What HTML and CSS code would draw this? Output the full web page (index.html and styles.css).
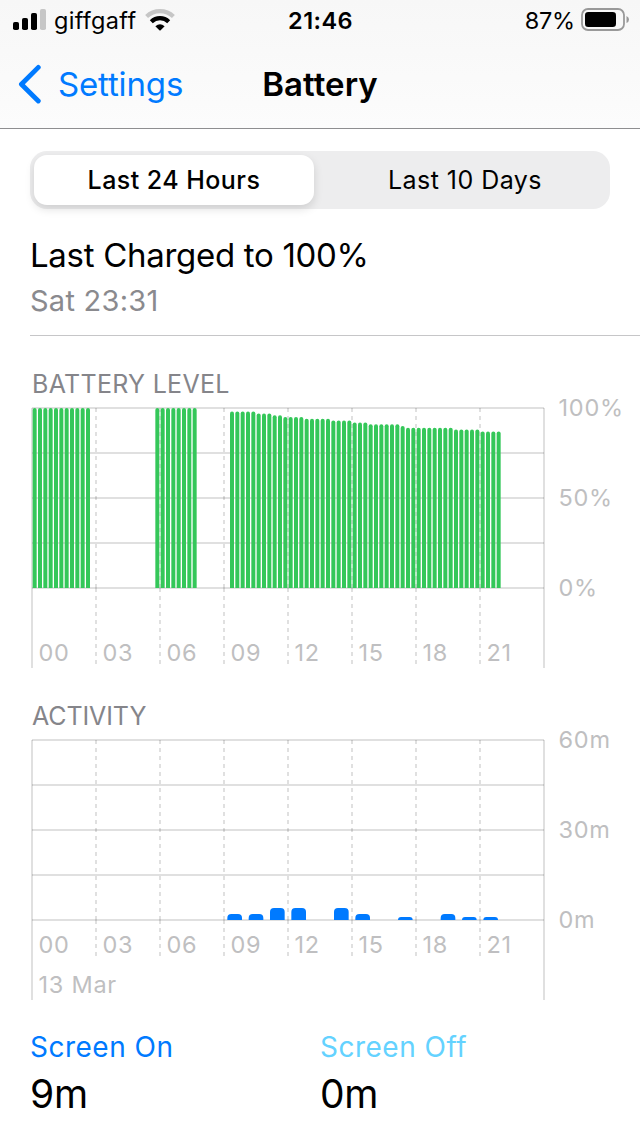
FILE: index.html
```html
<!DOCTYPE html>
<html lang="en">
<head>
<meta charset="utf-8">
<title>Battery</title>
<link rel="stylesheet" href="styles.css">
</head>
<body>
<header class="header">
  <div class="status">
    <div class="status-left">
      <svg class="signal" width="34" height="22" viewBox="0 0 34 22">
        <rect x="0" y="13" width="6" height="8" rx="1.8"/>
        <rect x="9" y="9" width="6" height="12" rx="1.8"/>
        <rect x="18" y="4" width="6" height="17" rx="1.8"/>
        <rect x="27" y="0" width="6" height="21" rx="1.8" fill="#c6c6c6"/>
      </svg>
      <span class="carrier">giffgaff</span>
      <svg class="wifi" width="30" height="22" viewBox="0 0 30 22" fill="none">
        <path d="M1.6 7.6 A19.3 19.3 0 0 1 28.4 7.6" stroke="#c6c6c6" stroke-width="4.2"/>
        <path d="M6.3 12.7 A12.4 12.4 0 0 1 23.7 12.7" stroke="#000" stroke-width="4.2"/>
        <path d="M10.4 17.2 Q15 13.4 19.6 17.2 L15.6 21.2 Q15 21.8 14.4 21.2 Z" fill="#000"/>
      </svg>
    </div>
    <div class="clock">21:46</div>
    <div class="status-right">
      <span class="percent">87%</span>
      <svg width="48" height="24" viewBox="0 0 48 24">
        <rect x="1" y="1" width="42" height="21" rx="6" fill="none" stroke="#999" stroke-width="1.8"/>
        <rect x="4" y="4" width="31" height="15" rx="3.3"/>
        <path d="M45.5 8 Q48 9 48 11.5 Q48 14 45.5 15 Z" fill="#999"/>
      </svg>
    </div>
  </div>
  <nav class="nav">
    <a class="back">
      <svg width="24" height="40" viewBox="0 0 24 40" fill="none" stroke="#007aff" stroke-width="4.8" stroke-linecap="round" stroke-linejoin="round"><path d="M20.3 3.4 L3.4 20.2 L20.3 37"/></svg>
      <span>Settings</span>
    </a>
    <h1 class="title">Battery</h1>
  </nav>
</header>
<main>
  <div class="segments">
    <div class="segment selected"><span>Last 24 Hours</span></div>
    <div class="segment days"><span>Last 10 Days</span></div>
  </div>
  <section class="charged">
    <div class="charged-title"><span>Last Charged to 100%</span></div>
    <div class="charged-time"><span>Sat 23:31</span></div>
  </section>
  <section class="panel">
    <h2 class="heading level">BATTERY LEVEL</h2>
    <svg id="level" class="chart" width="640" height="308" viewBox="0 392 640 308"></svg>
  </section>
  <section class="panel">
    <h2 class="heading activity">ACTIVITY</h2>
    <svg id="activity" class="chart" width="640" height="284" viewBox="0 724 640 284"></svg>
  </section>
  <section class="totals">
    <div class="total"><div class="label on"><span>Screen On</span></div><div class="value"><span>9m</span></div></div>
    <div class="total"><div class="label off"><span>Screen Off</span></div><div class="value"><span>0m</span></div></div>
  </section>
</main>
<script src="script.js"></script>
</body>
</html>
```
FILE: styles.css
```css
* { box-sizing: border-box; }
body {
  margin: 0;
  width: 640px;
  height: 1136px;
  overflow: hidden;
  background: #fff;
  color: #000;
  font-family: Inter, "Liberation Sans", sans-serif;
}
.header {
  height: 129px;
  background: linear-gradient(#f7f7f7, #fcfcfc);
  border-bottom: 1px solid #8e8e90;
}
.status {
  height: 40px;
  display: grid;
  grid-template-columns: 1fr auto 1fr;
  align-items: center;
  padding: 0 11px 0 13px;
  font-size: 23.5px;
}
.status-left, .status-right { display: flex; align-items: center; }
.status-right { justify-content: flex-end; gap: 6px; }
.signal { margin-top: -1px; }
.carrier { margin-left: 7px; letter-spacing: 0.3px; }
.wifi { margin-left: 9px; }
.clock { font-weight: 600; letter-spacing: 0.4px; padding-right: 1px; }
.percent { letter-spacing: -0.2px; }
.nav {
  height: 88px;
  display: grid;
  grid-template-columns: 1fr auto 1fr;
  align-items: center;
  padding: 0 18px;
}
.back { display: flex; align-items: center; gap: 16px; color: #007aff; font-size: 33px; letter-spacing: -0.15px; }
.title { margin: 0; font-size: 33px; font-weight: 600; letter-spacing: 0.05px; }
.segments {
  margin: 22px 30px 0;
  height: 58px;
  padding: 4px;
  display: grid;
  grid-template-columns: 280px 1fr;
  gap: 8px;
  border-radius: 17px;
  background: #ededee;
}
.segment {
  display: flex;
  align-items: center;
  justify-content: center;
  border-radius: 13px;
  font-size: 25px;
  font-weight: 500;
  letter-spacing: 0.45px;
}
.selected { background: #fff; box-shadow: 0 4px 10px rgba(0, 0, 0, .13); }
.days { font-weight: 400; padding-left: 2px; }
.charged {
  margin-left: 30px;
  height: 127px;
  padding-top: 25px;
  border-bottom: 1px solid #c6c6c8;
}
.charged-title { font-size: 33px; line-height: 42px; letter-spacing: -0.3px; }
.charged-time { margin-top: 7px; font-size: 29px; line-height: 36px; letter-spacing: 0.25px; color: #8a8a8e; }
.heading { margin: 0 0 0 32px; font-size: 25px; line-height: 16px; font-weight: 400; color: #85858a; }
.panel { display: flow-root; }
.level { margin-top: 40px; letter-spacing: 0.3px; }
.activity { margin-top: 8px; letter-spacing: -0.1px; }
.chart { display: block; }
.axis { fill: #bfbfc1; font-size: 23.5px; font-weight: 400; letter-spacing: 0.75px; }
.totals { display: grid; grid-template-columns: 290px 1fr; padding-left: 30px; margin-top: 20px; }
.label { font-size: 28px; line-height: 38px; letter-spacing: 0.5px; }
.on { color: #007aff; }
.off { color: #64d2ff; }
.value { font-size: 39px; line-height: 50px; margin-top: 3px; letter-spacing: -0.3px; }
```
FILE: script.js
```js
const GRID = 'stroke="#000" stroke-opacity=".12" stroke-width="2"';
const LEFT = 32, RIGHT = 544;

const line = (x1, y1, x2, y2, extra = "") =>
  `<line x1="${x1}" y1="${y1}" x2="${x2}" y2="${y2}" ${GRID} ${extra}/>`;

const label = (x, y, text) => `<text class="axis" x="${x}" y="${y}">${text}</text>`;

// Bar with rounded top corners standing on the base line.
const bar = (x, top, width, base, radius, fill) => {
  const r = Math.min(radius, base - top);
  return `<path fill="${fill}" d="M${x} ${base}V${top + r}Q${x} ${top} ${x + r} ${top}H${x + width - r}Q${x + width} ${top} ${x + width} ${top + r}V${base}Z"/>`;
};

function grid(top, bottom, dashEnd, hourY, unitLabels) {
  const base = top + 180;
  let out = "";
  for (let i = 0; i <= 4; i++) out += line(LEFT, top + i * 45, RIGHT, top + i * 45);
  out += line(LEFT, top, LEFT, bottom) + line(RIGHT, top, RIGHT, bottom);
  for (let i = 0; i < 8; i++) {
    const x = LEFT + i * 64;
    if (i) {
      out += line(x, top, x, base, 'stroke-dasharray="4 4"');
      out += line(x, base, x, dashEnd, 'stroke-dasharray="4 4"');
    }
    out += label(x + 6.5, hourY, String(i * 3).padStart(2, "0"));
  }
  unitLabels.forEach((t, i) => { out += label(558.5, top + i * 90 + 8, t); });
  return out;
}

let level = grid(408, 668, 664, 661, ["100%", "50%", "0%"]);
const runs = [
  [0, [[100, 11]]],
  [23, [[100, 8]]],
  [37, [[98, 5], [97, 3], [96, 2], [95, 4], [94, 5], [93, 4], [92, 3], [91, 6], [90, 1], [89, 9], [88, 5], [87, 4]]]
];
for (const [start, steps] of runs) {
  let slot = start;
  for (const [value, count] of steps) {
    for (let n = 0; n < count; n++, slot++) {
      level += bar(LEFT + slot * 16 / 3 + 2 / 3, 588 - value * 1.8, 4, 588, 2, "#34c759");
    }
  }
}
document.getElementById("level").innerHTML = level;

let activity = grid(740, 1000, 956, 953, ["60m", "30m", "0m"]) + label(38.5, 993, "13 Mar");
const hours = { 9: 6, 10: 6, 11: 12, 12: 12, 14: 12, 15: 6, 17: 3, 19: 6, 20: 3, 21: 3 };
for (const [hour, height] of Object.entries(hours)) {
  activity += bar(LEFT + hour * 64 / 3 + 10 / 3, 920 - height, 44 / 3, 920, 4, "#007aff");
}
document.getElementById("activity").innerHTML = activity;
```
